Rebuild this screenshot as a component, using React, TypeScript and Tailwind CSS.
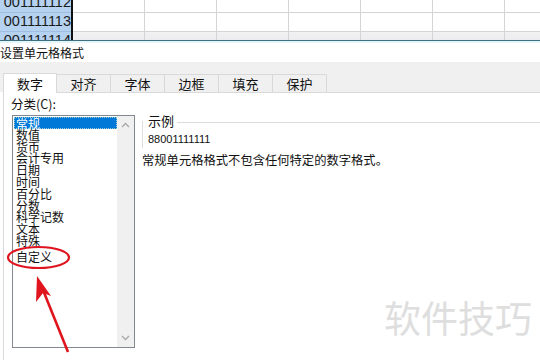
const CJK = "font-['Noto_Sans_CJK_SC','Noto_Sans',sans-serif]";

const categories = [
	"常规",
	"数值",
	"货币",
	"会计专用",
	"日期",
	"时间",
	"百分比",
	"分数",
	"科学记数",
	"文本",
	"特殊",
	"自定义",
];

const tabs = ["数字", "对齐", "字体", "边框", "填充", "保护"];

function SheetRow({ value, last }: { value: string; last?: boolean }) {
	return (
		<div className="flex h-[19px] shrink-0">
			<div className="flex w-[71px] shrink-0 items-center justify-end overflow-hidden border-b border-[#9fbde0] bg-[#b5d2f0] font-['Liberation_Sans',sans-serif] text-[14.5px] text-[#1a1a1a]">
				{value}
			</div>
			<div className="w-[2px] shrink-0 bg-[#111]" />
			{[0, 1, 2, 3, 4, 5, 6].map((i) => (
				<div
					key={i}
					className={`w-[72px] shrink-0 border-r border-b border-[#d4d4d4] ${
						last ? "bg-gradient-to-b from-[#f2f2f2] to-[#e6e1e8]" : "bg-white"
					}`}
				/>
			))}
		</div>
	);
}

function Chevron({ up }: { up?: boolean }) {
	return (
		<svg width="9" height="6" viewBox="0 0 9 6" className="text-[#a8a8a8]">
			<path
				d={up ? "M1 5 L4.5 1.5 L8 5" : "M1 1 L4.5 4.5 L8 1"}
				fill="none"
				stroke="currentColor"
				strokeWidth="1.3"
			/>
		</svg>
	);
}

export default function App() {
	return (
		<div
			className={`relative flex h-[360px] w-[540px] flex-col overflow-hidden bg-white ${CJK}`}
		>
			{/* spreadsheet behind the dialog */}
			<div className="flex h-[40px] shrink-0 flex-col overflow-hidden">
				<div className="mt-[-6px] flex flex-col">
					<SheetRow value="001111112" />
					<SheetRow value="001111113" />
					<SheetRow value="001111114" last />
				</div>
			</div>
			<div className="h-[1px] shrink-0 bg-[#3f6f7e]" />
			<div className="h-[2px] shrink-0 bg-[#e3f7fb]" />

			{/* title */}
			<div className="flex h-[19px] shrink-0 items-center text-[12px] text-[#111]">
				设置单元格格式
			</div>

			{/* tabs */}
			<div className="flex h-[30px] shrink-0 items-end bg-[#f0f0f0] pl-[3px]">
				{tabs.map((t, i) =>
					i === 0 ? (
						<div
							key={t}
							className="z-10 mb-[-1px] flex h-[20px] w-[54px] items-center justify-center border-x border-t border-[#d9d9d9] bg-white text-[13px] text-[#111]"
						>
							{t}
						</div>
					) : (
						<div
							key={t}
							className="flex h-[18px] w-[54px] items-center justify-center border-t border-r border-[#d9d9d9] bg-[#f0f0f0] text-[13px] text-[#111]"
						>
							{t}
						</div>
					),
				)}
			</div>

			{/* panel */}
			<div className="ml-[3px] flex flex-1 border-t border-l border-[#d9d9d9] bg-white">
				<div className="flex w-[131px] shrink-0 flex-col pl-[7px]">
					<div className="flex h-[22px] items-center text-[12.5px] text-[#111]">
						分类(C):
					</div>
					<div className="ml-[1px] flex h-[233px] w-[123px] border border-[#828790] bg-white">
						<div className="flex flex-1 flex-col pt-[1px] pl-[1px] text-[12px] leading-[11.8px] text-[#111]">
							{categories.map((c, i) => (
								<div
									key={c}
									className={
										i === 0
											? "h-[11.8px] border border-dotted border-[#9cc] bg-[#0078d7] pl-[1px] text-white"
											: i === categories.length - 1
												? "mt-[4px] h-[11.8px] pl-[2px]"
												: "h-[11.8px] pl-[2px]"
									}
								>
									{c}
								</div>
							))}
						</div>
						<div className="flex w-[17px] flex-col items-center justify-between bg-[#f0f0f0] py-[6px]">
							<Chevron up />
							<Chevron />
						</div>
					</div>
				</div>

				<div className="flex flex-1 flex-col pt-[28px] pl-[7px]">
					<div className="flex h-[27px] border-l border-[#dcdcdc]">
						<div className="flex flex-1 flex-col">
							<div className="flex h-[10px] items-start">
								<span className="mt-[-7px] pr-[3px] pl-[5px] text-[13px] leading-[14px] text-[#111]">
									示例
								</span>
								<div className="mt-[1px] h-[1px] flex-1 bg-[#dcdcdc]" />
							</div>
							<div className="pt-[2px] pl-[5px] font-['Liberation_Sans',sans-serif] text-[11px] leading-[12px] text-[#111]">
								88001111111
							</div>
						</div>
					</div>
					<div className="pt-[5px] text-[12.3px] leading-[14px] text-[#111]">
						常规单元格格式不包含任何特定的数字格式。
					</div>
				</div>
			</div>

			{/* watermark */}
			<div className="pointer-events-none absolute top-[294px] left-[384px] text-[37px] leading-[46px] text-[#dedede]">
				软件技巧
			</div>

			{/* red annotation */}
			<svg
				className="pointer-events-none absolute top-0 left-0"
				width="540"
				height="360"
				viewBox="0 0 540 360"
			>
				<ellipse
					cx="38.5"
					cy="257.5"
					rx="30.5"
					ry="10.5"
					fill="none"
					stroke="#e0141e"
					strokeWidth="2.2"
				/>
				<line
					x1="68"
					y1="352"
					x2="43"
					y2="290"
					stroke="#e0141e"
					strokeWidth="2.6"
				/>
				<path d="M37 276 L51 296 L43 293 L36 302 Z" fill="#e0141e" />
			</svg>
		</div>
	);
}
